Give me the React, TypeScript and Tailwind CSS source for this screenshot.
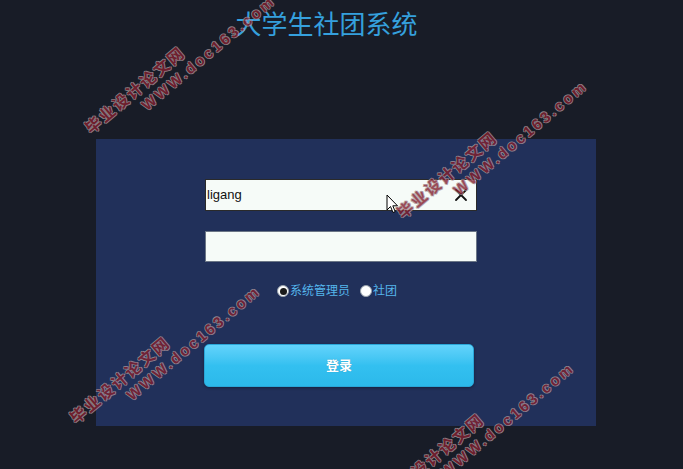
import { X } from "lucide-react"

const marks = [
  { left: 82, top: 124 },
  { left: 394, top: 209 },
  { left: 67, top: 414 },
  { left: 381, top: 491 },
]

function Watermark({ left, top }: { left: number; top: number }) {
  return (
    <div
      className="pointer-events-none absolute origin-top-left rotate-[-40deg] whitespace-nowrap font-bold text-[#84202f] opacity-80 [font-family:'Liberation_Sans','Noto_Sans_CJK_SC',sans-serif] [text-shadow:1px_0_#a8979d,-1px_0_#a8979d,0_1px_#a8979d,0_-1px_#a8979d]"
      style={{ left, top }}
    >
      <div className="text-[16px] leading-[18px] tracking-[1.8px]">毕业设计论文网</div>
      <div className="ml-[58px] text-[15px] leading-[18px] tracking-[2.6px]">WWW.doc163.com</div>
    </div>
  )
}

function Radio({ checked, label }: { checked?: boolean; label: string }) {
  return (
    <label className="flex items-center">
      <span className="flex h-[12px] w-[12px] items-center justify-center rounded-full border border-[#9aa3ad] bg-white">
        {checked && <span className="h-[7px] w-[7px] rounded-full bg-[#1a1a1a]" />}
      </span>
      <span className="ml-[1px] text-[12px] leading-none text-[#55b6ec]">{label}</span>
    </label>
  )
}

export default function App() {
  return (
    <div className="relative h-[469px] w-[683px] overflow-hidden bg-[#181c27] [font-family:'Liberation_Sans','Noto_Sans_CJK_SC',sans-serif]">
      {/* Title */}
      <h1 className="h-[41px] pt-[10px] pr-[30px] text-center text-[26px] font-normal leading-[31px] text-[#35a0dd]">
        大学生社团系统
      </h1>

      {/* Login panel */}
      <div className="ml-[96px] mt-[98px] h-[287px] w-[500px] bg-[#21305a] pl-[109px] pt-[40px]">
        <div className="flex h-[32px] w-[272px] items-center justify-between border border-[#2a2a2a] bg-[#f6fbf8] pl-[1px] pr-[5px]">
          <span className="text-[13px] text-[#111]">ligang</span>
          <X size={20} strokeWidth={2.2} className="text-[#111]" />
        </div>
        <div className="mt-[20px] h-[31px] w-[272px] border border-[#6b7686] bg-[#f6fbf8]" />

        <div className="mt-[23px] flex items-center pl-[72px]">
          <Radio checked label="系统管理员" />
          <span className="w-[10px]" />
          <Radio label="社团" />
        </div>

        <button className="ml-[-1px] mt-[47px] flex h-[43px] w-[270px] items-center justify-center rounded-[5px] border border-[#2aa6d8] bg-gradient-to-b from-[#62d3fb] via-[#33c0f0] to-[#2cb9ea] text-[13px] font-bold text-white shadow-[0_1px_3px_rgba(0,0,0,0.35)] [text-shadow:0_0_1px_rgba(0,0,0,0.25)]">
          登录
        </button>
      </div>

      {/* Mouse cursor */}
      <svg
        className="pointer-events-none absolute left-[386px] top-[194px]"
        width="13"
        height="21"
        viewBox="0 0 13 21"
      >
        <path
          d="M1 1 L1 16 L4.5 12.5 L7 18.5 L9.2 17.6 L6.8 11.8 L11.5 11.8 Z"
          fill="#fff"
          stroke="#000"
          strokeWidth="1"
          strokeLinejoin="round"
        />
      </svg>

      {marks.map((m, i) => (
        <Watermark key={i} left={m.left} top={m.top} />
      ))}
    </div>
  )
}
